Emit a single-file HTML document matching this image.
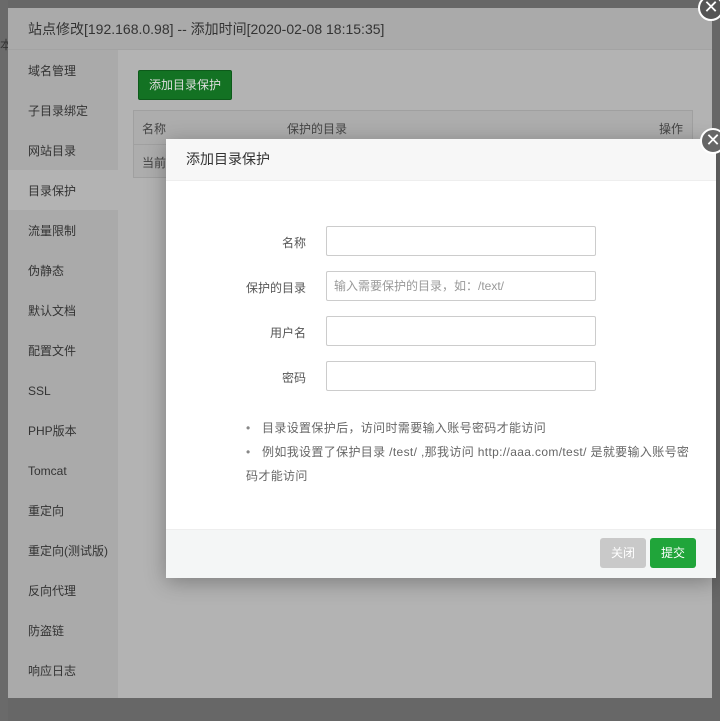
<!DOCTYPE html>
<html><head><meta charset="utf-8"><style>
*{box-sizing:border-box;margin:0;padding:0}
body{width:720px;height:721px;overflow:hidden;background:#676767;font-family:"Liberation Sans","Noto Sans CJK SC",sans-serif;font-size:12px;position:relative}
.a{position:absolute}
.side div{position:absolute;left:0;width:110px;height:40px;line-height:42px;padding-left:20px;color:#333;font-size:12px}
.lbl{position:absolute;width:140px;text-align:right;color:#555;font-size:12px;left:166px}
.inp{position:absolute;left:326px;width:270px;height:30px;border:1px solid #ccc;border-radius:2px;background:#fff;color:#999;padding-left:7px;line-height:28px;font-size:12px}
.x{position:absolute;width:26px;height:26px;border-radius:50%;background:#666;border:2px solid #fff;color:#fff;text-align:center}
</style></head><body>
<div class="a" style="left:0;top:0;width:8px;height:721px;background:#6a6a6a"></div>
<div class="a" style="left:8px;top:8px;width:704px;height:690px;background:#b3b3b3"></div>
<div class="a" style="left:8px;top:8px;width:704px;height:42px;background:#aaaaaa;border-bottom:1px solid #a3a3a3;line-height:42px;padding-left:20px;font-size:14px;color:#333">站点修改[192.168.0.98] -- 添加时间[2020-02-08 18:15:35]</div>
<div class="a" style="left:0;top:36px;width:8px;height:18px;font-size:12px;color:#333;line-height:18px;overflow:hidden">本</div>
<div class="a side" style="left:8px;top:50px;width:110px;height:648px;background:#aaaaaa">
<div style="top:0">域名管理</div><div style="top:40px">子目录绑定</div><div style="top:80px">网站目录</div>
<div style="top:120px;background:#b3b3b3">目录保护</div><div style="top:160px">流量限制</div><div style="top:200px">伪静态</div>
<div style="top:240px">默认文档</div><div style="top:280px">配置文件</div><div style="top:320px">SSL</div>
<div style="top:360px">PHP版本</div><div style="top:400px">Tomcat</div><div style="top:440px">重定向</div>
<div style="top:480px">重定向(测试版)</div><div style="top:520px">反向代理</div><div style="top:560px">防盗链</div><div style="top:600px">响应日志</div>
</div>
<div class="a" style="left:138px;top:70px;width:94px;height:30px;background:#137223;border:1px solid #0d5a1a;border-radius:2px;color:#ddd;line-height:28px;text-align:center">添加目录保护</div>
<div class="a" style="left:133px;top:110px;width:560px;height:68px;border:1px solid #a0a0a0;background:#adadad"></div>
<div class="a" style="left:133px;top:144px;width:560px;height:1px;background:#a0a0a0"></div>
<div class="a" style="left:142px;top:120px;color:#444">名称</div>
<div class="a" style="left:287px;top:120px;color:#444">保护的目录</div>
<div class="a" style="left:659px;top:120px;color:#444">操作</div>
<div class="a" style="left:142px;top:154px;color:#444">当前</div>
<div class="x" style="left:698px;top:-5px;background:#555;line-height:21px;font-size:18px">✕</div>

<div class="a" style="left:166px;top:139px;width:550px;height:439px;background:#fff;box-shadow:0 4px 20px rgba(0,0,0,.3)"></div>
<div class="a" style="left:166px;top:139px;width:550px;height:42px;background:#f7f7f7;border-bottom:1px solid #eee;line-height:41px;padding-left:20px;font-size:14px;color:#333">添加目录保护</div>
<div class="lbl" style="top:234px">名称</div>
<div class="lbl" style="top:279px">保护的目录</div>
<div class="lbl" style="top:324px">用户名</div>
<div class="lbl" style="top:369px">密码</div>
<div class="inp" style="top:226px"></div>
<div class="inp" style="top:271px">输入需要保护的目录，如：/text/</div>
<div class="inp" style="top:316px"></div>
<div class="inp" style="top:361px"></div>
<div class="a" style="left:246px;top:416px;width:452px;color:#666;line-height:24px;font-size:12px;letter-spacing:0.35px">
<div><span style="display:inline-block;width:16px;color:#888">•</span>目录设置保护后，访问时需要输入账号密码才能访问</div>
<div><span style="display:inline-block;width:16px;color:#888">•</span>例如我设置了保护目录 /test/ ,那我访问 http://aaa.com/test/ 是就要输入账号密码才能访问</div>
</div>
<div class="a" style="left:166px;top:529px;width:550px;height:49px;background:#f4f6f6;border-top:1px solid #eee"></div>
<div class="a" style="left:600px;top:538px;width:46px;height:30px;background:#c9c9c9;border-radius:3px;color:#fff;text-align:center;line-height:30px">关闭</div>
<div class="a" style="left:650px;top:538px;width:46px;height:30px;background:#20a53a;border-radius:3px;color:#fff;text-align:center;line-height:30px">提交</div>
<div class="x" style="left:700px;top:128px;line-height:21px;font-size:18px">✕</div>
</body></html>
